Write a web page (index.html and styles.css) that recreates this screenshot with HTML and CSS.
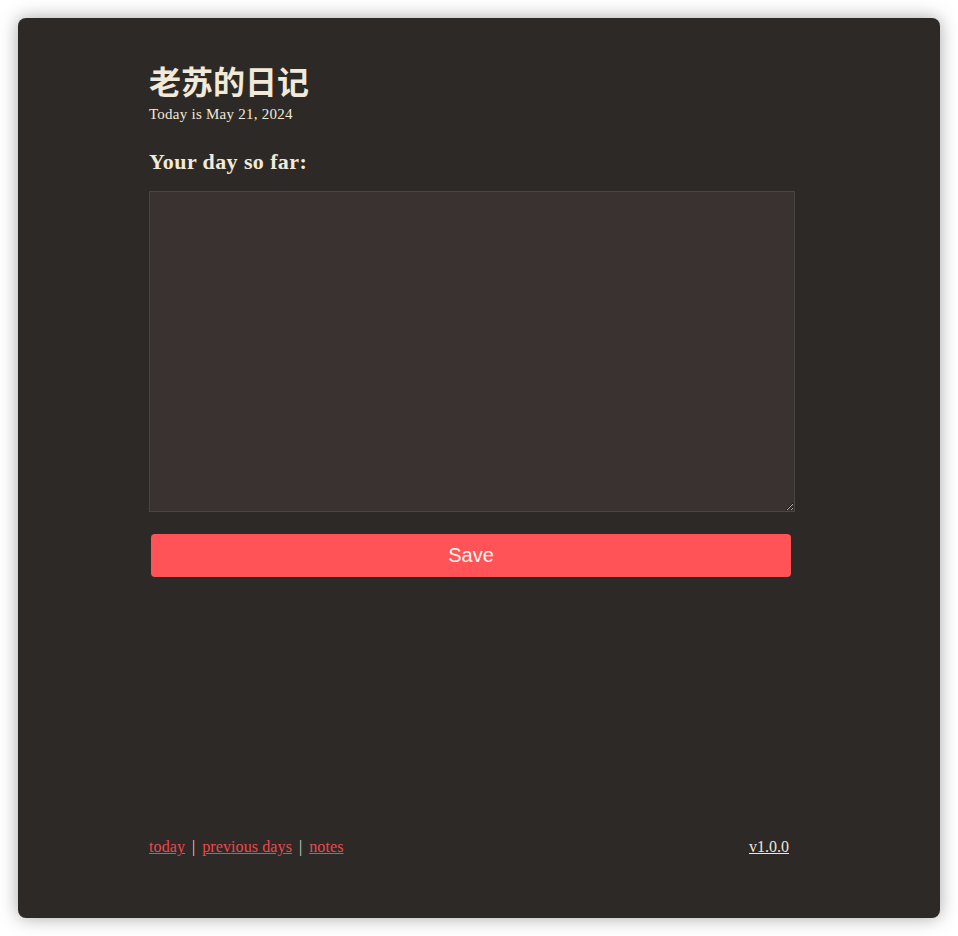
FILE: index.html
```html
<!DOCTYPE html>
<html lang="zh">
<head>
<meta charset="utf-8">
<title>老苏的日记</title>
<link rel="stylesheet" href="styles.css">
</head>
<body>
<div class="window">
  <main class="content">
    <h1 class="title">老苏的日记</h1>
    <p class="date">Today is May 21, 2024</p>
    <h2 class="prompt">Your day so far:</h2>
    <textarea class="entry"></textarea>
    <button class="save">Save</button>
  </main>
  <footer class="footer">
    <nav class="nav">
      <a href="#">today</a><span class="sep">|</span><a href="#">previous days</a><span class="sep">|</span><a href="#">notes</a>
    </nav>
    <a class="version" href="#">v1.0.0</a>
  </footer>
</div>
</body>
</html>
```
FILE: styles.css
```css
html, body {
  margin: 0;
  padding: 0;
  background: #ffffff;
}
body {
  padding: 18px;
  font-family: "Liberation Serif", "Noto Sans CJK SC", serif;
  color: #f2ead9;
}
.window {
  width: 922px;
  height: 900px;
  box-sizing: border-box;
  background: #2d2927;
  border-radius: 8px;
  box-shadow: 0 0 18px rgba(0, 0, 0, 0.35);
  display: flex;
  flex-direction: column;
  padding: 0 131px 61px 131px;
}
.content {
  display: flex;
  flex-direction: column;
  width: 646px;
}
.title {
  margin: 40px 0 0 0;
  font-family: "Noto Sans CJK SC", sans-serif;
  font-weight: 700;
  font-size: 32px;
  line-height: 44px;
}
.date {
  margin: 2px 0 0 0;
  font-size: 15px;
  line-height: 20px;
  letter-spacing: 0.25px;
}
.prompt {
  margin: 24px 0 0 0;
  font-size: 22px;
  line-height: 28px;
  font-weight: 700;
  letter-spacing: 0.4px;
}
.entry {
  margin: 15px 0 0 0;
  width: 646px;
  height: 321px;
  box-sizing: border-box;
  background: #3a3230;
  border: 1px solid #4a4443;
  border-radius: 0;
  color: #f2ead9;
  font-family: "Liberation Serif", serif;
  font-size: 15px;
}
.save {
  margin: 22px 0 0 2px;
  width: 640px;
  height: 43px;
  border: none;
  border-radius: 4px;
  background: #ff5357;
  color: #fff3ee;
  font-family: "Liberation Sans", Arial, sans-serif;
  font-size: 20px;
  cursor: pointer;
}
.footer {
  margin-top: auto;
  width: 640px;
  display: flex;
  justify-content: space-between;
  align-items: baseline;
  font-size: 16px;
  line-height: 20px;
}
.nav a {
  color: #f0474c;
  letter-spacing: 0.1px;
}
.sep {
  color: #e0d8c8;
  margin: 0 7px;
}
.version {
  color: #efe6d4;
}
```
